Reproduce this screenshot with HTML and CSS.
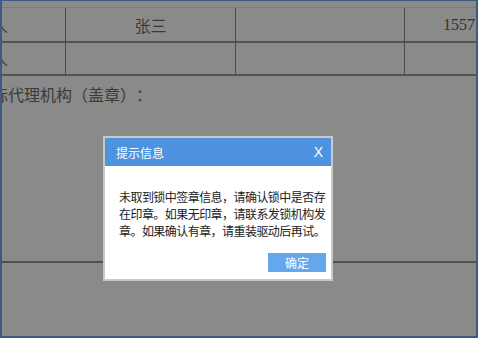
FILE: index.html
```html
<!DOCTYPE html>
<html lang="zh">
<head>
<meta charset="utf-8">
<link rel="stylesheet" href="styles.css">
</head>
<body>
<div class="frame">
  <div class="page">
    <div class="tbl">
      <div class="cell c1 r1"><span class="cut">人</span></div>
      <div class="cell c2 r1">张三</div>
      <div class="cell c3 r1"></div>
      <div class="cell c4 r1"><span class="num">1557</span></div>
      <div class="cell c1"><span class="cut">人</span></div>
      <div class="cell c2"></div>
      <div class="cell c3"></div>
      <div class="cell c4"></div>
    </div>
    <div class="sign"><span class="cut">标代理机构（盖章）：</span></div>
  </div>
  <div class="dialog">
    <div class="dlg-head">
      <span class="dlg-title">提示信息</span>
      <span class="dlg-close">X</span>
    </div>
    <div class="dlg-body">未取到锁中签章信息，请确认锁中是否存在印章。如果无印章，请联系发锁机构发章。如果确认有章，请重装驱动后再试。</div>
    <div class="dlg-foot"><span class="btn">确定</span></div>
  </div>
</div>
</body>
</html>
```

FILE: styles.css
```css
html, body {
  margin: 0;
  padding: 0;
  background: #8a8a8a;
}
.frame {
  position: relative;
  box-sizing: border-box;
  width: 478px;
  height: 338px;
  border: 2px solid #3f5a82;
  border-top-width: 1px;
  overflow: hidden;
  font-family: "Noto Sans CJK SC", sans-serif;
  color: #333;
  text-spacing-trim: space-all;
}
.page {
  padding-top: 6px;
}
.tbl {
  display: grid;
  grid-template-columns: 63px 170px 169px 1fr;
  grid-auto-rows: 33px;
  border-top: 1px solid #7d7d7d;
  border-bottom: 2px solid #545454;
}
.cell {
  display: flex;
  align-items: center;
  font-size: 16px;
  line-height: 20px;
  color: #3a3a3a;
}
.r1 {
  height: 33px;
  border-bottom: 2px solid #545454;
}
.c2, .c3, .c4 {
  border-left: 1px solid #4a4a4a;
}
.c2 {
  justify-content: center;
}
.c4 {
  padding-left: 38px;
}
.cut {
  margin-left: -10px;
  white-space: nowrap;
}
.num {
  font-family: "Liberation Serif", serif;
  font-size: 16px;
  color: #333;
}
.sign {
  box-sizing: border-box;
  height: 187px;
  padding-top: 8px;
  font-size: 16px;
  line-height: 20px;
  color: #3a3a3a;
  border-bottom: 2px solid #505050;
}
.dialog {
  position: absolute;
  left: 101px;
  top: 135px;
  width: 230px;
  box-sizing: border-box;
  border: 2px solid #c9c9c9;
  background: #fff;
}
.dlg-head {
  height: 28px;
  background: #4e93e0;
  display: flex;
  align-items: center;
  justify-content: space-between;
  padding: 0 8px 0 11px;
  color: #fff;
}
.dlg-title {
  font-size: 12px;
}
.dlg-close {
  font-family: "Liberation Sans", sans-serif;
  font-size: 14px;
}
.dlg-body {
  padding: 22px 2px 0 14px;
  font-size: 12px;
  letter-spacing: -0.55px;
  line-height: 17px;
  color: #222;
}
.dlg-foot {
  display: flex;
  justify-content: flex-end;
  padding: 14px 5px 7px 0;
}
.btn {
  width: 58px;
  height: 19px;
  background: #65a7ec;
  color: #fff;
  font-size: 12px;
  line-height: 19px;
  text-align: center;
}
```
